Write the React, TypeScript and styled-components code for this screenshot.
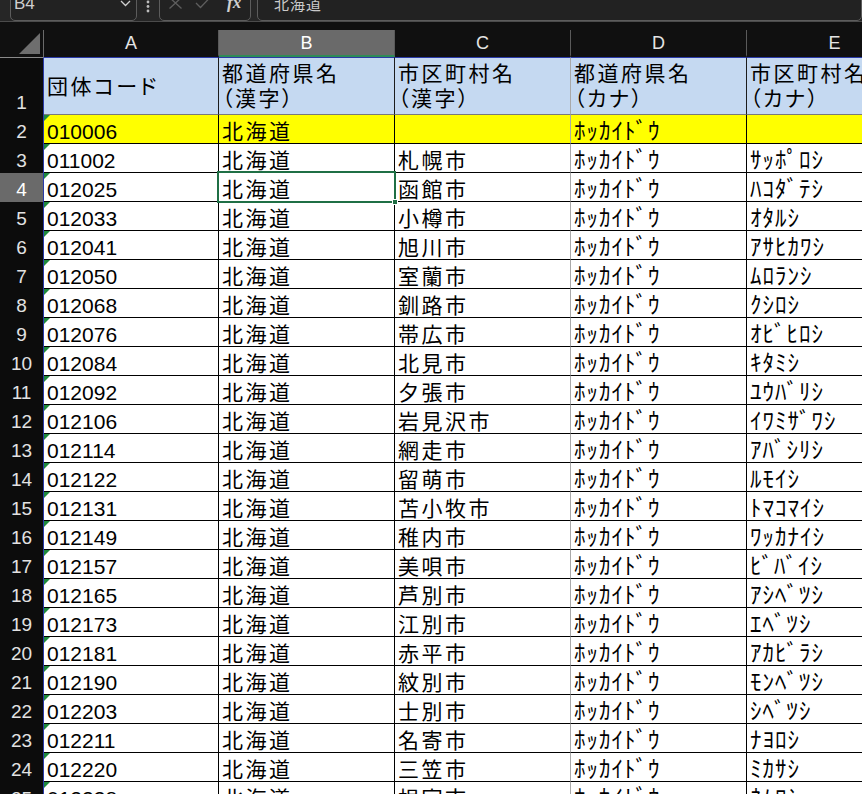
import React from 'react';
import styled, { createGlobalStyle, css } from 'styled-components';

const GlobalStyle = createGlobalStyle`
  *, *::before, *::after { box-sizing: border-box; }
  html, body { margin: 0; padding: 0; background: #101010; }
  body { overflow: hidden; }
`;

const Window = styled.div`
  width: 862px;
  height: 794px;
  overflow: hidden;
  background: #101010;
  font-family: "Liberation Sans", "Noto Sans CJK JP", sans-serif;
`;

/* ---------- formula bar ---------- */

const FormulaBar = styled.div`
  height: 22px;
  display: flex;
  align-items: flex-end;
  padding-left: 10px;
  background: #262626;
  border-bottom: 1px solid #4b4b4b;
  overflow: hidden;
`;

const BarBox = styled.div<{ $width?: number }>`
  flex: ${p => (p.$width ? `0 0 ${p.$width}px` : '1 1 auto')};
  height: 30px;
  display: flex;
  align-items: center;
  border: 1px solid #5c5c5c;
  border-radius: 5px;
  background: #222222;
`;

const NameText = styled.span`
  flex: 1;
  padding: 0 0 4px 3px;
  color: #cfcfcf;
  font-size: 17px;
`;

const Chevron = styled.svg`
  margin: 0 5px 6px 0;
`;

const Kebab = styled.svg`
  flex: 0 0 auto;
  margin: 0 9px 8px 9px;
`;

const BarIcons = styled.div`
  display: flex;
  align-items: center;
  gap: 12px;
  padding: 0 0 6px 8px;
`;

const FxMark = styled.span`
  margin-left: 4px;
  color: #cfcfcf;
  font-family: "Liberation Serif", serif;
  font-style: italic;
  font-weight: bold;
  font-size: 17px;
  line-height: 14px;
`;

const FormulaText = styled.span`
  padding: 0 0 6px 16px;
  color: #cacaca;
  font-family: "Noto Sans CJK JP", sans-serif;
  font-size: 15px;
  letter-spacing: 1px;
`;

/* ---------- sheet grid ---------- */

const Sheet = styled.div`
  margin-top: 8px;
  display: grid;
  grid-template-columns: 44px 175px 176px 176px 176px 176px;
  grid-template-rows: 27px 58px;
  grid-auto-rows: 29px;
`;

const Corner = styled.div`
  background: #101010;
  border-right: 1px solid #6a6a6a;
`;

const ColHead = styled.div<{ $active?: boolean }>`
  display: flex;
  align-items: center;
  justify-content: center;
  background: ${p => (p.$active ? '#6a6a6a' : '#101010')};
  color: ${p => (p.$active ? '#ffffff' : '#e4e4e4')};
  border-right: 1px solid #5a5a5a;
  border-bottom: 2px solid ${p => (p.$active ? '#2e8b57' : 'transparent')};
  padding-top: 2px;
  font-size: 18px;
`;

const RowHead = styled.div<{ $active?: boolean; $top?: boolean }>`
  display: flex;
  align-items: flex-end;
  justify-content: center;
  padding-bottom: 1px;
  background: ${p => (p.$active ? '#6a6a6a' : '#0c0c0c')};
  color: ${p => (p.$active ? '#ffffff' : '#e2e2e2')};
  border-right: 1px solid #2a3aa8;
  border-top: ${p => (p.$top ? '1px solid #8a8a8a' : 'none')};
  font-size: 19px;
  line-height: 22px;
`;

const HeadCell = styled.div<{ $soft?: boolean }>`
  display: flex;
  flex-direction: column;
  justify-content: center;
  padding: 0 3px;
  background: #c5d9f1;
  color: #000;
  border-top: 1px solid #2a3aa8;
  border-bottom: 1px solid #7a7a7a;
  border-right: 1px solid ${p => (p.$soft ? '#a9a9a9' : '#1c1c1c')};
  font-size: 21px;
  line-height: 25px;
  letter-spacing: 2.5px;
  font-feature-settings: "palt";
  white-space: nowrap;
`;

const Cell = styled.div<{
  $fill?: string;
  $soft?: boolean;
  $track?: number;
  $size?: number;
  $flag?: boolean;
}>`
  position: relative;
  display: flex;
  align-items: flex-end;
  padding: 0 3px;
  background: ${p => p.$fill ?? '#ffffff'};
  color: #000;
  border-right: 1px solid ${p => (p.$soft ? '#a9a9a9' : '#000000')};
  border-bottom: 1px solid #000000;
  font-size: ${p => p.$size ?? 21}px;
  line-height: 23px;
  letter-spacing: ${p => p.$track ?? 0}px;
  white-space: nowrap;

  ${p =>
    p.$flag &&
    css`
      &::before {
        content: '';
        position: absolute;
        top: 0;
        left: 0;
        border-top: 6px solid #1f8a3e;
        border-right: 6px solid transparent;
      }
    `}
`;

const Selection = styled.div`
  position: absolute;
  inset: -2px;
  border: 2px solid #1f6f45;
  z-index: 2;
  pointer-events: none;

  &::after {
    content: '';
    position: absolute;
    right: -4px;
    bottom: -4px;
    width: 6px;
    height: 6px;
    background: #1f6f45;
    border: 1px solid #ffffff;
  }
`;

const columns = ['A', 'B', 'C', 'D', 'E'];

const headers: string[][] = [
  ['団体コード'],
  ['都道府県名', '（漢字）'],
  ['市区町村名', '（漢字）'],
  ['都道府県名', '（カナ）'],
  ['市区町村名', '（カナ）'],
];

const records: [string, string, string][] = [
  ['010006', '', ''],
  ['011002', '札幌市', 'ｻｯﾎﾟﾛｼ'],
  ['012025', '函館市', 'ﾊｺﾀﾞﾃｼ'],
  ['012033', '小樽市', 'ｵﾀﾙｼ'],
  ['012041', '旭川市', 'ｱｻﾋｶﾜｼ'],
  ['012050', '室蘭市', 'ﾑﾛﾗﾝｼ'],
  ['012068', '釧路市', 'ｸｼﾛｼ'],
  ['012076', '帯広市', 'ｵﾋﾞﾋﾛｼ'],
  ['012084', '北見市', 'ｷﾀﾐｼ'],
  ['012092', '夕張市', 'ﾕｳﾊﾞﾘｼ'],
  ['012106', '岩見沢市', 'ｲﾜﾐｻﾞﾜｼ'],
  ['012114', '網走市', 'ｱﾊﾞｼﾘｼ'],
  ['012122', '留萌市', 'ﾙﾓｲｼ'],
  ['012131', '苫小牧市', 'ﾄﾏｺﾏｲｼ'],
  ['012149', '稚内市', 'ﾜｯｶﾅｲｼ'],
  ['012157', '美唄市', 'ﾋﾞﾊﾞｲｼ'],
  ['012165', '芦別市', 'ｱｼﾍﾞﾂｼ'],
  ['012173', '江別市', 'ｴﾍﾞﾂｼ'],
  ['012181', '赤平市', 'ｱｶﾋﾞﾗｼ'],
  ['012190', '紋別市', 'ﾓﾝﾍﾞﾂｼ'],
  ['012203', '士別市', 'ｼﾍﾞﾂｼ'],
  ['012211', '名寄市', 'ﾅﾖﾛｼ'],
  ['012220', '三笠市', 'ﾐｶｻｼ'],
  ['012238', '根室市', 'ﾈﾑﾛｼ'],
];

const PREF = '北海道';
const PREF_KANA = 'ﾎｯｶｲﾄﾞｳ';

export default function App() {
  return (
    <Window>
      <GlobalStyle />
      <FormulaBar>
        <BarBox $width={127}>
          <NameText>B4</NameText>
          <Chevron width="11" height="7" viewBox="0 0 11 7">
            <polyline points="1,1 5.5,5.5 10,1" fill="none" stroke="#cfcfcf" strokeWidth="1.3" />
          </Chevron>
        </BarBox>
        <Kebab width="4" height="13" viewBox="0 0 4 13">
          <circle cx="2" cy="2" r="1.4" fill="#bdbdbd" />
          <circle cx="2" cy="6.5" r="1.4" fill="#bdbdbd" />
          <circle cx="2" cy="11" r="1.4" fill="#bdbdbd" />
        </Kebab>
        <BarBox $width={92}>
          <BarIcons>
            <svg width="15" height="12" viewBox="0 0 15 12">
              <path d="M1.5 0.5 L13.5 11.5 M13.5 0.5 L1.5 11.5" stroke="#5e5e5e" strokeWidth="1.3" fill="none" />
            </svg>
            <svg width="16" height="12" viewBox="0 0 16 12">
              <polyline points="1,6 5.5,10.5 15,0.5" stroke="#5e5e5e" strokeWidth="1.3" fill="none" />
            </svg>
            <FxMark>fx</FxMark>
          </BarIcons>
        </BarBox>
        <BarBox style={{ marginLeft: 6 }}>
          <FormulaText>北海道</FormulaText>
        </BarBox>
      </FormulaBar>

      <Sheet>
        <Corner>
          <svg width="42" height="27" viewBox="0 0 42 27">
            <polygon points="19,24 40,24 40,3" fill="#6e6e6e" />
          </svg>
        </Corner>
        {columns.map(c => (
          <ColHead key={c} $active={c === 'B'}>{c}</ColHead>
        ))}

        <RowHead $top>1</RowHead>
        {headers.map((lines, i) => (
          <HeadCell key={i} $soft={i === 2}>
            {lines.map(l => (
              <span key={l}>{l}</span>
            ))}
          </HeadCell>
        ))}

        {records.map(([code, city, cityKana], i) => {
          const row = i + 2;
          const fill = row === 2 ? '#ffff00' : undefined;
          return (
            <React.Fragment key={code}>
              <RowHead $active={row === 4}>{row}</RowHead>
              <Cell $fill={fill} $flag>{code}</Cell>
              <Cell $fill={fill} $track={2.5}>
                {PREF}
                {row === 4 && <Selection />}
              </Cell>
              <Cell $fill={fill} $track={2.5} $soft>{city}</Cell>
              <Cell $fill={fill} $size={23} $track={1}>{PREF_KANA}</Cell>
              <Cell $fill={fill} $size={23} $track={1}>{cityKana}</Cell>
            </React.Fragment>
          );
        })}
      </Sheet>
    </Window>
  );
}
